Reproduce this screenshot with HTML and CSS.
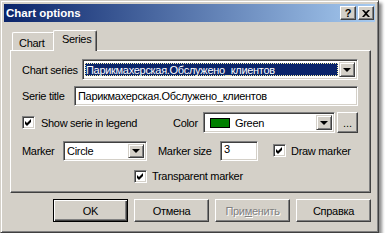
FILE: index.html
```html
<!DOCTYPE html>
<html lang="en">
  <head>
    <meta charset="UTF-8" />
    <meta name="viewport" content="width=device-width, initial-scale=1.0" />
    <title>Chart options</title>
    <link rel="stylesheet" href="styles.css">
  </head>
  <body>
    <div class="window">
      <div class="titlebar">
        <span class="title">Chart options</span>
        <button class="caption-btn help">?</button>
        <button class="caption-btn close">
          <svg width="8" height="7" viewBox="0 0 8 7">
            <path d="M0 0h2l2 2 2-2h2L5 3.5 8 7H6L4 5 2 7H0l3-3.5z" fill="#000" />
          </svg>
        </button>
      </div>

      <div class="content">
        <div class="tabs">
          <div class="tab chart">Chart</div>
          <div class="tab active">Series</div>
        </div>

        <div class="panel">
          <div class="row row-series">
            <span class="label w-series">Chart series</span>
            <div class="combo series">
              <span class="combo-text selected">Парикмахерская.Обслужено_клиентов</span>
              <span class="drop"><i class="arrow"></i></span>
            </div>
          </div>

          <div class="row row-title">
            <span class="label w-title">Serie title</span>
            <div class="edit title-edit">Парикмахерская.Обслужено_клиентов</div>
          </div>

          <div class="row row-legend">
            <label class="check w-legend">
              <span class="box checked"></span>Show serie in legend
            </label>
            <span class="label w-color">Color</span>
            <div class="combo color">
              <span class="combo-text"><span class="swatch"></span>Green</span>
              <span class="drop"><i class="arrow"></i></span>
            </div>
            <button class="btn dots">...</button>
          </div>

          <div class="row row-marker">
            <span class="label w-marker">Marker</span>
            <div class="combo marker">
              <span class="combo-text">Circle</span>
              <span class="drop"><i class="arrow"></i></span>
            </div>
            <span class="label w-size">Marker size</span>
            <div class="edit size-edit">3</div>
            <label class="check draw">
              <span class="box checked"></span>Draw marker
            </label>
          </div>

          <div class="row row-transparent">
            <label class="check">
              <span class="box checked"></span>Transparent marker
            </label>
          </div>
        </div>

        <div class="buttons">
          <button class="btn default">OK</button>
          <button class="btn">Отмена</button>
          <button class="btn disabled">При<u>м</u>енить</button>
          <button class="btn">Справка</button>
        </div>
      </div>
    </div>
  </body>
</html>
```

FILE: styles.css
```css
body {
  margin: 0;
  background-color: #fff;
  font-family: "Liberation Sans", Arial, sans-serif;
  font-size: 11px;
  letter-spacing: -0.3px;
  color: #000;
}

.window {
  width: 379px;
  height: 233px;
  box-sizing: border-box;
  padding: 3px;
  background-color: #d4d0c8;
  border: 1px solid;
  border-color: #d4d0c8 #404040 #404040 #d4d0c8;
  box-shadow: inset 1px 1px #fff, inset -1px -1px #808080,
    3px 3px 3px rgba(0, 0, 0, 0.45);
}

/* title bar */

.titlebar {
  height: 18px;
  display: flex;
  align-items: center;
  padding-left: 2px;
  background: linear-gradient(to right, #0a246a, #a6caf0);
  color: #fff;
  font-weight: bold;
  font-size: 11.5px;
  letter-spacing: 0;
}

.title {
  flex: 1;
}

.caption-btn {
  width: 16px;
  height: 14px;
  padding: 0;
  margin-left: 2px;
  display: flex;
  align-items: center;
  justify-content: center;
  font-family: "Liberation Sans", Arial, sans-serif;
  font-size: 11px;
  font-weight: bold;
  line-height: 1;
  color: #000;
  background-color: #d4d0c8;
  border: 1px solid;
  border-color: #fff #404040 #404040 #fff;
  box-shadow: inset -1px -1px #808080;
}

.caption-btn.close {
  margin-right: 1px;
}

/* tabs */

.content {
  padding: 0 4px 0 6px;
}

.tabs {
  display: flex;
  align-items: flex-end;
  height: 20px;
  margin-top: 8px;
  padding-left: 2px;
}

.tab {
  height: 18px;
  box-sizing: border-box;
  padding: 3px 0 0 6px;
  line-height: 14px;
  background-color: #d4d0c8;
  border-top: 1px solid #fff;
  border-left: 1px solid #fff;
  border-right: 1px solid #404040;
  border-radius: 2px 2px 0 0;
  box-shadow: inset -1px 0 #808080;
}

.tab.chart {
  width: 43px;
}

.tab.active {
  width: 44px;
  height: 21px;
  margin: 0 -2px -1px;
  padding: 1px 0 0 8px;
  position: relative;
  z-index: 1;
}

.panel {
  height: 143px;
  box-sizing: border-box;
  padding: 8px 12px 0 11px;
  border: 1px solid;
  border-color: #fff #404040 #404040 #fff;
  box-shadow: inset -1px -1px #808080;
}

/* form rows */

.row {
  display: flex;
  align-items: center;
}

.row-series {
  height: 21px;
}

.row-title {
  height: 20px;
  margin-top: 6px;
}

.row-legend {
  height: 21px;
  margin-top: 6px;
}

.row-marker {
  height: 21px;
  margin-top: 7px;
}

.row-transparent {
  height: 20px;
  margin-top: 5px;
  padding-left: 112px;
}

.label {
  flex-shrink: 0;
  white-space: nowrap;
}

.w-series { width: 60px; }
.w-title { width: 52px; }
.w-legend { width: 151px; }
.w-color { width: 30px; }
.w-marker { width: 41px; }
.w-size { width: 62px; margin-left: 11px; }

/* sunken fields */

.edit,
.combo {
  box-sizing: border-box;
  background-color: #fff;
  border: 1px solid;
  border-color: #808080 #fff #fff #808080;
  box-shadow: inset 1px 1px #404040, inset -1px -1px #d4d0c8;
  white-space: nowrap;
  overflow: hidden;
}

.edit {
  height: 20px;
  padding: 3px 3px 0;
  line-height: 13px;
}

.title-edit {
  width: 284px;
}

.size-edit {
  width: 38px;
  padding-top: 1px;
}

.combo {
  height: 21px;
  display: flex;
  padding: 2px;
}

.combo.series { width: 276px; }
.combo.color { width: 132px; }
.combo.marker { width: 84px; height: 20px; }

.combo-text {
  flex: 1;
  display: flex;
  align-items: center;
  padding-left: 1px;
  overflow: hidden;
}

.combo-text.selected {
  margin: 1px 1px 1px 0;
  padding-left: 1px;
  background-color: #0a246a;
  color: #fff;
  outline: 1px dotted #f4f0a8;
  outline-offset: -1px;
}

.swatch {
  width: 20px;
  height: 10px;
  box-sizing: border-box;
  margin: 0 5px 0 3px;
  background-color: #008000;
  border: 1px solid #000;
}

.drop {
  width: 16px;
  box-sizing: border-box;
  display: flex;
  align-items: center;
  justify-content: center;
  background-color: #d4d0c8;
  border: 1px solid;
  border-color: #d4d0c8 #404040 #404040 #d4d0c8;
  box-shadow: inset 1px 1px #fff, inset -1px -1px #808080;
}

.arrow {
  width: 0;
  height: 0;
  border-left: 4px solid transparent;
  border-right: 4px solid transparent;
  border-top: 4px solid #000;
}

/* check boxes */

.check {
  display: flex;
  align-items: center;
  white-space: nowrap;
}

.box {
  width: 13px;
  height: 13px;
  box-sizing: border-box;
  margin-right: 5px;
  flex-shrink: 0;
  background-color: #fff;
  border: 1px solid;
  border-color: #808080 #fff #fff #808080;
  box-shadow: inset 1px 1px #404040, inset -1px -1px #d4d0c8;
}

.box.checked {
  background: #fff url("data:image/svg+xml,%3Csvg xmlns='http://www.w3.org/2000/svg' width='11' height='11'%3E%3Cpath d='M2 4l2 2 4-4v3l-4 4-2-2z' fill='%23000'/%3E%3C/svg%3E") no-repeat 0 0;
}

.check.w-legend .box {
  margin-right: 6px;
}

.check.draw {
  margin-left: 15px;
}

/* push buttons */

.btn {
  height: 23px;
  padding: 0;
  font-family: "Liberation Sans", Arial, sans-serif;
  font-size: 11px;
  letter-spacing: -0.3px;
  color: #000;
  background-color: #d4d0c8;
  border: 1px solid;
  border-color: #fff #404040 #404040 #fff;
  box-shadow: inset -1px -1px #808080;
}

.btn.dots {
  width: 21px;
  height: 21px;
  margin-left: 2px;
  letter-spacing: 0;
}

.buttons {
  display: flex;
  justify-content: flex-end;
  gap: 6px;
  margin-top: 6px;
}

.buttons .btn {
  width: 75px;
}

.btn.default {
  border-color: #000;
  box-shadow: inset 1px 1px #fff, inset -1px -1px #404040, inset -2px -2px #808080;
}

.btn.disabled {
  color: #808080;
  text-shadow: 1px 1px #fff;
}
```
